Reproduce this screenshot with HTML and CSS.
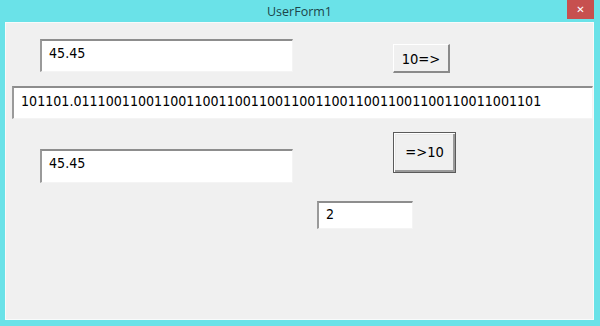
FILE: index.html
```html
<!DOCTYPE html>
<html>
<head>
  <meta charset="UTF-8">
  <title>UserForm1</title>
  <link rel="stylesheet" href="styles.css">
</head>
<body>

  <div class="window">
    <div class="titlebar">
      <span class="title">UserForm1</span>
      <span class="close-btn">&#x2715;</span>
    </div>

    <div class="client">
      <div class="row row1">
        <div class="textbox tb-short">45.45</div>
        <div class="button btn-to-bin">10=&gt;</div>
      </div>

      <div class="row row2">
        <div class="textbox tb-long">101101.0111001100110011001100110011001100110011001100110011001101</div>
      </div>

      <div class="row row3">
        <div class="textbox tb-short tb-result">45.45</div>
        <div class="button btn-default">=&gt;10</div>
      </div>

      <div class="row row4">
        <div class="textbox tb-small">2</div>
      </div>
    </div>
  </div>

</body>
</html>
```

FILE: styles.css
```css
html, body { margin: 0; padding: 0; }
body { width: 600px; height: 326px; overflow: hidden; background: #6ae2e8; }

.window { width: 600px; height: 326px; background: #6ae2e8; box-sizing: border-box; padding: 0 6px 6px 5px; display: flex; flex-direction: column; }

.titlebar { height: 22px; position: relative; display: flex; align-items: center; justify-content: center; }
.title { font-family: "Open Sans", "Noto Sans", sans-serif; font-size: 12.5px; color: #1d4549; padding-top: 1px; }
.close-btn { position: absolute; right: 0; top: 0; width: 27px; height: 19px; background: #c7504f; color: #fff; font-family: "DejaVu Sans", sans-serif; font-size: 10px; font-weight: bold; display: flex; align-items: center; justify-content: center; }

.client { flex: 1; background: #f0f0f0; border: 1px solid #f8fbfb; box-sizing: border-box; font-family: "DejaVu Sans Condensed", "DejaVu Sans", sans-serif; font-stretch: condensed; font-size: 14.1px; color: #000; }

.row { display: flex; align-items: flex-start; }
.row1 { margin-top: 16px; }
.row2 { margin-top: 13px; }
.row3 { margin-top: 13px; }
.row4 { margin-top: 18px; }

.textbox { background: #fff; box-sizing: border-box; border-top: 2px solid #8d8d8d; border-left: 2px solid #9a9a9a; border-right: 1px solid #f4f4f4; border-bottom: 1px solid #f4f4f4; padding: 2px 0 0 7px; white-space: nowrap; overflow: hidden; }
.tb-short { width: 253px; height: 33px; margin-left: 34px; padding-top: 4px; }
.tb-result { margin-top: 17px; height: 34px; }
.tb-long { width: 582px; height: 33px; margin-left: 6px; padding-top: 5px; }
.tb-small { width: 96px; height: 28px; margin-left: 311px; padding-top: 3px; }

.button { box-sizing: border-box; display: flex; align-items: center; justify-content: center; background: #f0f0f0; font-size: 14.6px; }
.btn-to-bin { width: 57px; height: 29px; margin-left: 100px; margin-top: 5px; border-top: 1px solid #fff; border-left: 1px solid #fff; border-right: 2px solid #8a8a8a; border-bottom: 2px solid #8a8a8a; }
.btn-default { width: 63px; height: 41px; margin-left: 100px; border: 1px solid #5a5a5a; box-shadow: inset 1px 1px 0 #fff, inset -2px -2px 0 #9a9a9a, inset 2px 2px 0 #e8e8e8; padding-bottom: 2px; }
```
